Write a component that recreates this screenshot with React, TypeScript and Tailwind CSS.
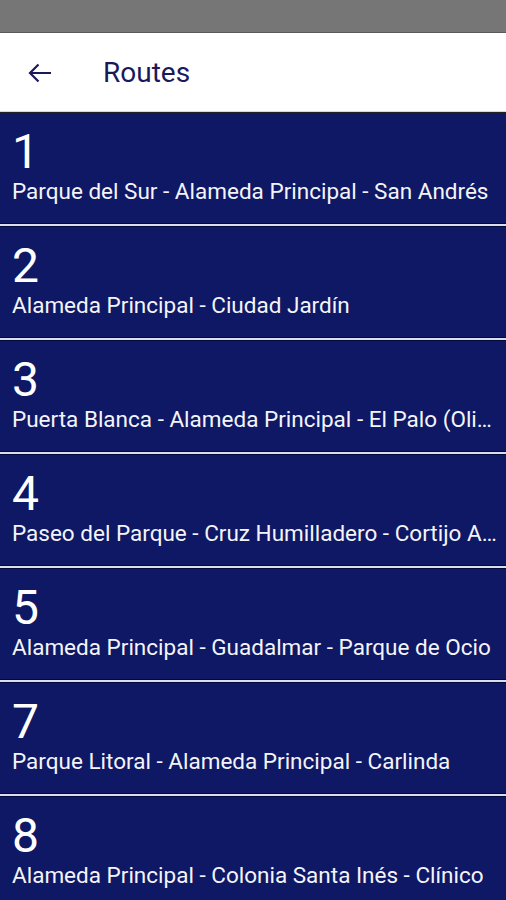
import React from "react";

const routes = [
  { n: "1", name: "Parque del Sur - Alameda Principal - San Andrés" },
  { n: "2", name: "Alameda Principal - Ciudad Jardín" },
  { n: "3", name: "Puerta Blanca - Alameda Principal - El Palo (Olivar)" },
  { n: "4", name: "Paseo del Parque - Cruz Humilladero - Cortijo Alto" },
  { n: "5", name: "Alameda Principal - Guadalmar - Parque de Ocio" },
  { n: "7", name: "Parque Litoral - Alameda Principal - Carlinda" },
  { n: "8", name: "Alameda Principal - Colonia Santa Inés - Clínico" },
];

export default function App() {
  return (
    <div
      className="w-[506px] h-[900px] overflow-hidden bg-[#0e1865]"
      style={{ fontFamily: "Roboto, 'Noto Sans', sans-serif" }}
    >
      <div className="h-[33px] bg-[#767676] border-b border-[#5a5a5a]" />
      <div className="h-[79px] bg-white flex items-center border-b border-[#d8d8d8]">
        <div className="w-[80px] pl-[28px] flex items-center pt-[2px]">
          <svg width="24" height="20" viewBox="0 0 24 20" fill="none">
            <path
              d="M23 10H2.5M10.5 1.5L2 10l8.5 8.5"
              stroke="#1a1a5a"
              strokeWidth="2.2"
            />
          </svg>
        </div>
        <div className="pl-[23px] text-[28px] text-[#1a1a5a] leading-none pt-[2px]">Routes</div>
      </div>
      <div className="h-px bg-[#222]" />
      <div className="flex flex-col">
        {routes.map((r) => (
          <div key={r.n} className="flex flex-col">
            <div className="h-[110px] bg-[#0e1865] pl-3 pr-1 pt-[15px] text-white">
              <div className="text-[48px] leading-[48px]">{r.n}</div>
              <div className="mt-[2px] text-[22.5px] leading-[26px] truncate text-[#f4f4f8]">{r.name}</div>
            </div>
            <div className="h-px bg-[#000a3a]" />
            <div className="h-[2px] bg-[#dcdcec]" />
            <div className="h-px bg-[#000a3a]" />
          </div>
        ))}
      </div>
    </div>
  );
}
